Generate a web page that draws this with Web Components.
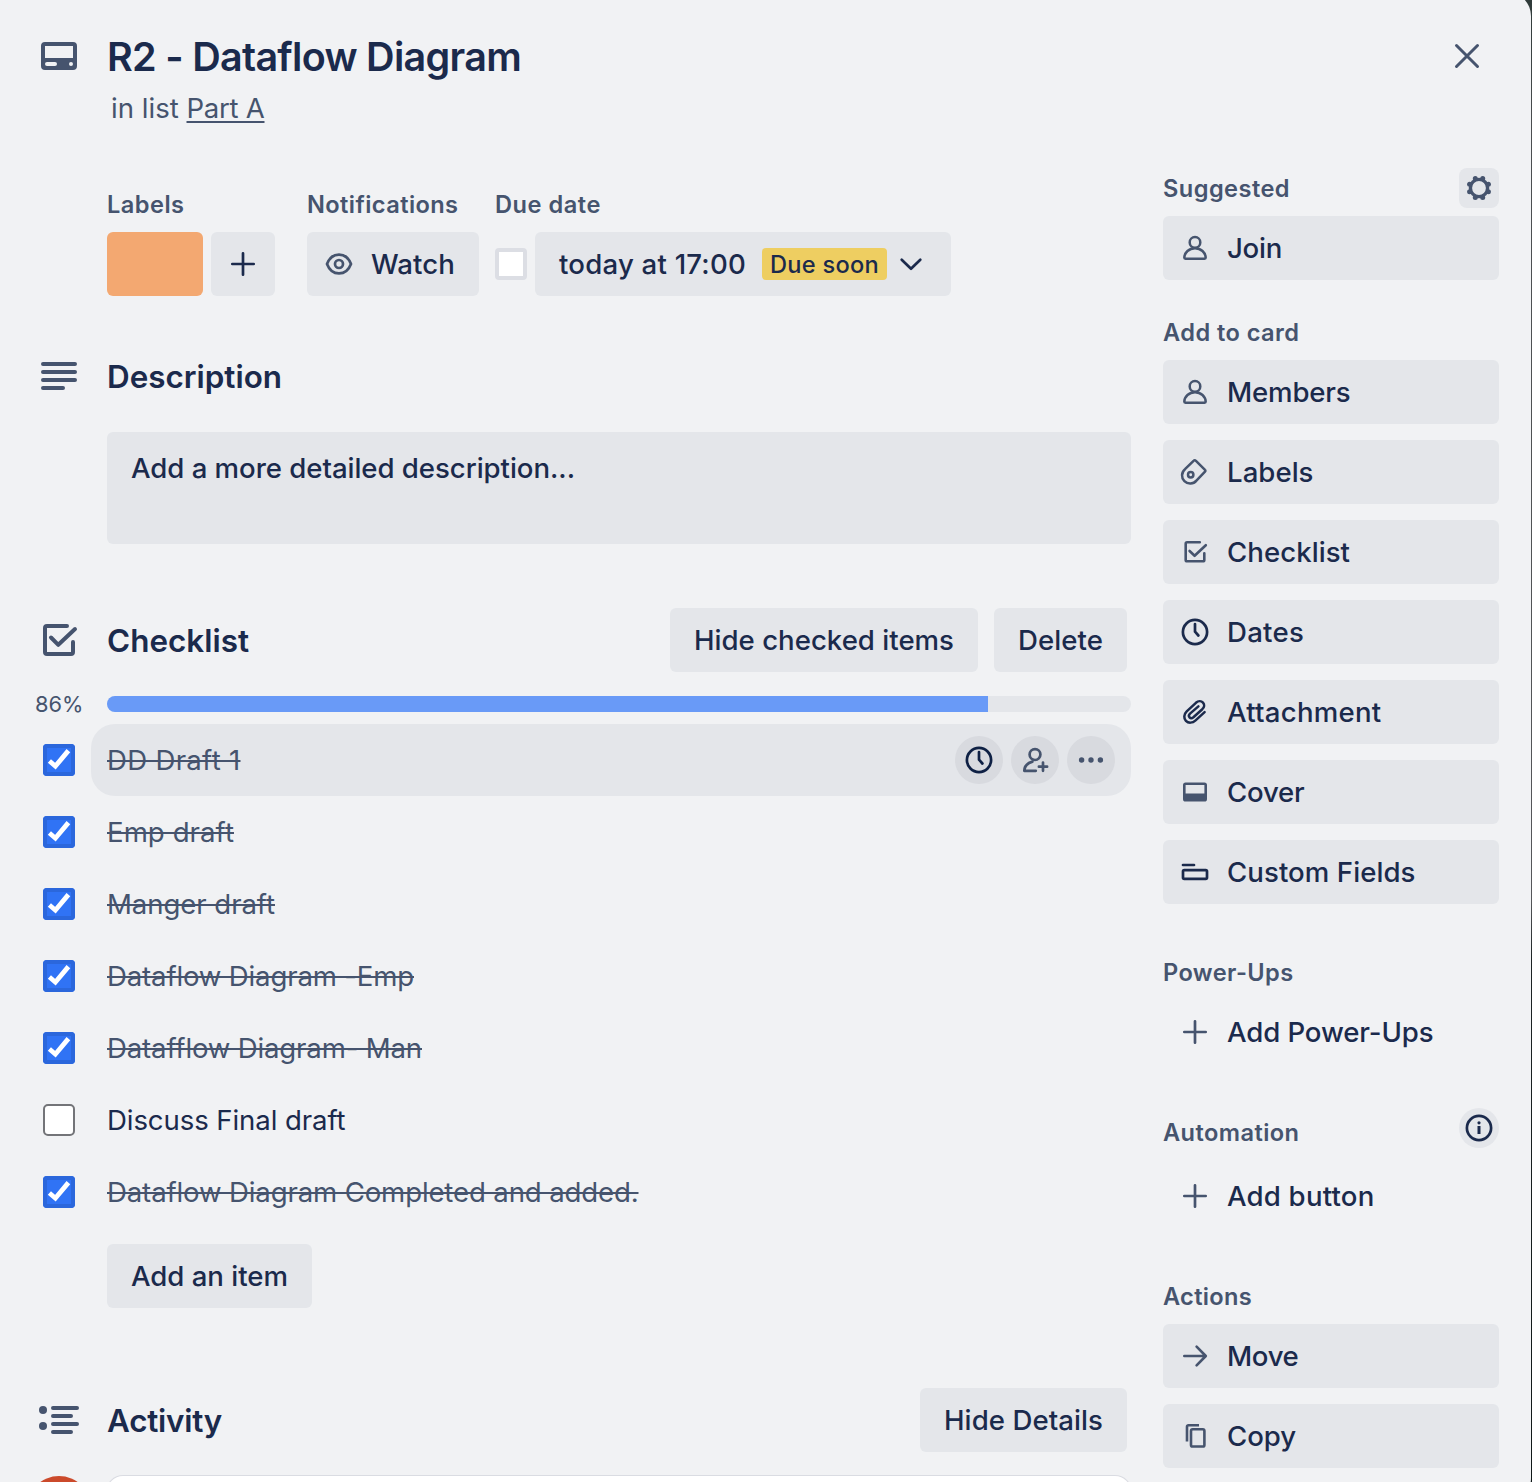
<!DOCTYPE html>
<html lang="en">
<head>
<meta charset="utf-8">
<title>R2 - Dataflow Diagram</title>
<style>
html,body{margin:0;height:1482px;overflow:hidden;background:linear-gradient(#2f3a39,#4b4e50 130px,#55575a 900px,#1c2324 960px,#101818)}
body{font-family:Inter,"Noto Sans",sans-serif;font-size:27.6px;color:#1b2a4c;
--bg:#f1f2f4;--btn:#e4e6ea;--ink:#1b2a4c;--muted:#46546e}
</style>
</head>
<body>
<card-dialog></card-dialog>
<script>
const ICONS = {
  card:['<path fill="currentColor" fill-rule="evenodd" d="M-14-14H14a4 4 0 0 1 4 4V10a4 4 0 0 1-4 4H-14a4 4 0 0 1-4-4V-10a4 4 0 0 1 4-4ZM-14-10V2H14V-10ZM-12 6a2 2 0 0 0 0 4h8a2 2 0 0 0 0-4ZM12 6a2 2 0 0 0 0 4a2 2 0 0 0 0-4Z" stroke="none"/>',0],
  lines:['<path d="M-16-12H16M-16-4H16M-16 4H16M-16 12H4"/>',4],
  activity:['<g fill="currentColor" stroke="none"><circle cx="-16" cy="-10" r="4"/><circle cx="-16" cy="6" r="4"/></g><path d="M-6-12H18M-6-4H12M-6 4H18M-6 12H12"/>',4],
  bigcheck:['<path d="M8-14H-12a2 2 0 0 0-2 2V12a2 2 0 0 0 2 2H12a2 2 0 0 0 2-2V2M-8-2.5L-.7 4.8L16-11"/>',4],
  close:['<path d="M-10.5-10.5L10.5 10.5M10.5-10.5L-10.5 10.5"/>',3],
  gear:['<circle r="8.6"/><g fill="currentColor" stroke="none"><circle cx="3.7" cy="9.4" r="2.5"/><circle cx="-3.7" cy="9.4" r="2.5"/><circle cx="3.7" cy="-9.4" r="2.5"/><circle cx="-3.7" cy="-9.4" r="2.5"/><circle cx="9.4" cy="3.7" r="2.5"/><circle cx="9.4" cy="-3.7" r="2.5"/><circle cx="-9.4" cy="3.7" r="2.5"/><circle cx="-9.4" cy="-3.7" r="2.5"/></g>',3.4],
  plus:['<path d="M-10.7 0H10.7M0-10.7V10.7"/>',2.7],
  eye:['<path d="M-12 0C-9.8-5.8-5.4-9.4 0-9.4S9.8-5.8 12 0C9.8 5.8 5.4 9.4 0 9.4S-9.8 5.8-12 0Z"/><circle r="4"/>',2.7],
  chevron:['<path d="M-9.3-4.2L0 4.8L9.3-4.2"/>',2.7],
  clock:['<circle r="12.1"/><path d="M0-8V-.3L3.4 3.5"/>',2.7],
  adduser:['<circle cy="-5.4" r="5.4"/><path d="M-2.6 1.6C-7.4 3-10.6 6.4-10.7 10.8H.8M8 2.6V10.8M3.9 6.7H12.1"/>',2.7],
  dots:['<g fill="currentColor" stroke="none"><circle cx="-9.4" r="2.7"/><circle r="2.7"/><circle cx="9.4" r="2.7"/></g>',0],
  member:['<circle cy="-5.6" r="5.3"/><path d="M-10.7 9.6C-10.5 4.6-6 .2 0 .2S10.5 4.6 10.7 9.6a1.1 1.1 0 0 1-1.1 1.1H-9.6a1.1 1.1 0 0 1-1.1-1.1Z"/>',2.5],
  label:['<path d="M-10-2.8L-1.2-11.4a1.3 1.3 0 0 1 1.9 0L10-2.2a1.3 1.3 0 0 1 0 1.9L1.4 8.6A8.1 8.1 0 1 1-10-2.8Z"/><circle cx="-4.3" cy="2.8" r="2.7"/>',2.5],
  check:['<path d="M4.8-9.7H-7.9a1.4 1.4 0 0 0-1.4 1.4V7.9a1.4 1.4 0 0 0 1.4 1.4H7.9a1.4 1.4 0 0 0 1.4-1.4V1.2M-5.4-1L-.4 3.8L10.8-6.8"/>',2.6],
  clip:['<path d="M9.6.2L.6 8.4C-2.6 11.4-6.8 11.2-9.1 8.8S-11.3 2.2-8.3-.7L.9-9.2C3.3-11.3 6.3-11.2 8-9.4S9.5-4.9 7.3-2.8L-1.6 5.2C-3 6.4-4.6 6.3-5.5 5.3S-6.2 2.8-5 1.6L3.4-5.6"/>',2.5],
  cover:['<path fill="currentColor" stroke="none" fill-rule="evenodd" d="M-9.4-9.6H9.4A2.6 2.6 0 0 1 12-7V7A2.6 2.6 0 0 1 9.4 9.6H-9.4A2.6 2.6 0 0 1-12 7V-7A2.6 2.6 0 0 1-9.4-9.6ZM-9.4-7V1.4H9.4V-7Z"/>',0],
  fields:['<path d="M-12-7H-1"/><rect x="-12" y="-1.8" width="24" height="8.6" rx="1.3"/>',2.7],
  info:['<circle r="12.1"/><path stroke-linecap="butt" stroke-width="3" d="M0-2V6"/><circle cy="-5.2" r="1.6" fill="currentColor" stroke="none"/>',2.7],
  arrow:['<path d="M-10.7 0H10.6M1.6-9.4L10.8 0L1.6 9.4"/>',2.6],
  copy:['<path stroke-linecap="butt" d="M4-10.7H-6.6a1.4 1.4 0 0 0-1.4 1.4V5.5"/><rect x="-4" y="-6.7" width="13.4" height="17.2" rx="1.6"/>',2.6]
};

class Base extends HTMLElement {
  constructor(){ super(); this.attachShadow({mode:'open'}); }
  connectedCallback(){ if(!this.shadowRoot.firstChild) this.shadowRoot.innerHTML = this.render(); }
  a(name, fallback=''){ return this.getAttribute(name) ?? fallback; }
}

/* Line of text spread over a given advance width */
class FitText extends HTMLElement {
  constructor(){
    super();
    this.attachShadow({mode:'open'}).innerHTML = '<style>:host{display:inline-block;white-space:pre;flex:none}</style><slot></slot>';
  }
  connectedCallback(){
    const width = parseFloat(this.getAttribute('w'));
    if(!width) return;
    const natural = this.getBoundingClientRect().width;
    this.style.letterSpacing = ((width - natural) / this.textContent.length).toFixed(3) + 'px';
  }
}

class UiIcon extends Base {
  render(){
    const [body, stroke] = ICONS[this.a('name')];
    return `<style>:host{display:block;width:40px;height:40px;flex:none;color:var(--muted)}svg{display:block;overflow:visible}</style>
    <svg width="40" height="40" viewBox="-20 -20 40 40" fill="none" stroke="currentColor" stroke-width="${stroke}" stroke-linecap="round" stroke-linejoin="round">${body}</svg>`;
  }
}

class UiButton extends Base {
  render(){
    return `<style>:host{display:flex;align-items:center;box-sizing:border-box;height:64px;padding:0 24px;background:var(--btn);border-radius:6px;font-weight:500;line-height:40px;flex:none}</style><slot></slot><fit-text w="${this.a('w')}">${this.a('label')}</fit-text>`;
  }
}

class SideButton extends Base {
  render(){
    return `<style>:host{display:flex;align-items:center;gap:12px;box-sizing:border-box;height:64px;padding:0 12px;background:var(--btn);border-radius:6px;font-weight:500;line-height:40px}
    :host([plain]){background:none}
    :host([dark]) ui-icon{color:var(--ink)}</style><ui-icon name="${this.a('icon')}"></ui-icon><fit-text w="${this.a('w')}">${this.a('label')}</fit-text>`;
  }
}

class SmallHeading extends Base {
  render(){
    return `<style>:host{display:flex;align-items:center;justify-content:space-between;height:40px;font-size:23.6px;font-weight:600;line-height:40px;color:var(--muted)}</style><fit-text w="${this.a('w')}">${this.a('label')}</fit-text><slot></slot>`;
  }
}

class SideSection extends Base {
  render(){
    return `<style>:host{display:flex;flex-direction:column}
    small-heading{line-height:42px;align-items:flex-start}
    .items{display:flex;flex-direction:column;gap:16px;margin-top:8px}</style>
    <small-heading label="${this.a('label')}" w="${this.a('w')}"><slot name="action"></slot></small-heading><div class="items"><slot></slot></div>`;
  }
}

class SectionHead extends Base {
  render(){
    return `<style>:host{display:flex;align-items:center;height:64px;margin-left:-68px;padding-right:4px;gap:16px}
    h2{margin:0 auto 0 12px;font-size:31.4px;font-weight:600;line-height:40px;padding-top:2px}</style>
    <ui-icon name="${this.a('icon')}"></ui-icon><h2><fit-text w="${this.a('w')}">${this.a('label')}</fit-text></h2><slot></slot>`;
  }
}

class CheckBox extends Base {
  render(){
    const kind = this.a('kind');
    return `<style>:host{display:block;box-sizing:border-box;width:32px;height:32px;border-radius:4px;flex:none;background:#fff}
    :host([kind=due]){border:4px solid #dcdee4}
    :host([kind=off]){border:2px solid #737478;border-radius:5px}
    :host([kind=on]){background:#3073f5;box-shadow:inset 0 0 0 4px #2b67dc}
    svg{display:block}</style>` + (kind === 'on' ? '<svg width="32" height="32" fill="none" stroke="#fff" stroke-width="4.8"><path d="M6.4 17L12.4 22.2L25.4 6.6"/></svg>' : '');
  }
}

class CheckItem extends Base {
  render(){
    const on = !this.hasAttribute('open');
    const tools = this.hasAttribute('active') ? '<div class="tools"><span><ui-icon class="d" name="clock"></ui-icon></span><span><ui-icon name="adduser"></ui-icon></span><span><ui-icon name="dots"></ui-icon></span></div>' : '';
    return `<style>:host{display:flex;align-items:center;height:72px;margin-left:-64px;gap:16px}
    .row{flex:1;display:flex;align-items:center;justify-content:space-between;box-sizing:border-box;height:72px;padding:0 16px;border-radius:24px;line-height:40px}
    :host([active]) .row{background:var(--btn)}
    .done{color:var(--muted);text-decoration:line-through;text-decoration-thickness:2px}
    .tools{display:flex;gap:8px}
    .tools span{display:flex;align-items:center;justify-content:center;width:48px;height:48px;border-radius:50%;background:#d8dadf}
    .d{color:#0e2044}</style>
    <check-box kind="${on ? 'on' : 'off'}"></check-box>
    <div class="row"><fit-text class="${on ? 'done' : ''}" w="${this.a('w')}">${this.a('label')}</fit-text>${tools}</div>`;
  }
}

class ProgressMeter extends Base {
  render(){
    return `<style>:host{display:flex;align-items:center;height:16px}
    .pct{width:72px;font-size:21.8px;line-height:16px;color:var(--muted)}
    .track{flex:1;height:16px;border-radius:8px;background:var(--btn);overflow:hidden}
    .fill{height:16px;width:${this.a('value')}%;background:#699af7}</style>
    <div class="pct"><fit-text w="48.5">${this.a('value')}%</fit-text></div><div class="track"><div class="fill"></div></div>`;
  }
}

class CardHeader extends Base {
  render(){
    return `<style>:host{display:flex;gap:28px;padding:36px 44px 0 39px;height:128px;box-sizing:border-box}
    .t{flex:1}
    h1{margin:0;height:42px;font-size:39.5px;font-weight:600;line-height:42px}
    p{margin:10px 0 0 4px;line-height:40px;height:40px;color:var(--muted);display:flex}
    .u{text-decoration:underline;text-decoration-thickness:2px;text-underline-offset:3px;text-decoration-skip-ink:none}
    .x{margin-top:-.5px}</style>
    <ui-icon name="card"></ui-icon>
    <div class="t"><h1><fit-text w="414">R2 - Dataflow Diagram</fit-text></h1><p><fit-text w="75.5">in list </fit-text><fit-text class="u" w="78">Part A</fit-text></p></div>
    <ui-icon class="x" name="close"></ui-icon>`;
  }
}

class CardMeta extends Base {
  render(){
    return `<style>:host{display:flex;align-items:flex-start}
    .g{display:flex;flex-direction:column;gap:7px}
    .r{display:flex;align-items:center;gap:8px}
    .l{margin-right:32px}.n{margin-right:16px}
    .swatch{width:96px;height:64px;border-radius:6px;background:#f3a871}
    .p{padding:0 12px}.p ui-icon,.due ui-icon{color:var(--ink)}
    .w{padding:0 24px 0 12px}
    .w ui-icon{margin-right:12px}
    .due{display:flex;align-items:center;box-sizing:border-box;width:416px;height:64px;padding-left:24px;border-radius:6px;background:var(--btn);font-weight:500;line-height:40px}
    .badge{margin:0 4px 0 16px;height:32px;width:125px;box-sizing:border-box;padding:0 8px;border-radius:4px;background:#eece61;font-size:23.6px;line-height:33px;white-space:nowrap}</style>
    <div class="g l"><small-heading label="Labels" w="77.5"></small-heading><div class="r"><div class="swatch"></div><ui-button class="p"><ui-icon name="plus"></ui-icon></ui-button></div></div>
    <div class="g n"><small-heading label="Notifications" w="151.5"></small-heading><ui-button class="w" label="Watch" w="84"><ui-icon name="eye"></ui-icon></ui-button></div>
    <div class="g"><small-heading label="Due date" w="106"></small-heading><div class="r"><check-box kind="due"></check-box><div class="due"><fit-text w="187">today at 17:00</fit-text><div class="badge"><fit-text w="109">Due soon</fit-text></div><ui-icon name="chevron"></ui-icon></div></div></div>`;
  }
}

class CommentRow extends Base {
  render(){
    return `<style>:host{display:flex;gap:16px;margin:24px 0 0 -80px}
    .av{width:64px;height:64px;border-radius:50%;background:#cb4a2b;flex:none}
    .box{flex:1;height:72px;box-sizing:border-box;border-radius:16px;background:#fff;box-shadow:0 0 0 1px #dadce2,0 2px 2px #ccd0d8}</style><div class="av"></div><div class="box"></div>`;
  }
}

class CardMain extends Base {
  render(){
    return `<style>:host{display:flex;flex-direction:column;width:1024px;padding-top:57px}
    .desc{height:112px;box-sizing:border-box;padding:16px 24px;border-radius:6px;background:var(--btn);font-weight:500;line-height:40px;margin:24px 0 64px}
    .d{margin-top:48px}.m{margin:24px 0 12px -72px}
    .add{align-self:flex-start;margin:16px 0 80px}</style>
    <card-meta></card-meta>
    <section-head class="d" icon="lines" label="Description" w="175"></section-head>
    <div class="desc"><fit-text w="444">Add a more detailed description...</fit-text></div>
    <section-head icon="bigcheck" label="Checklist" w="142"><ui-button label="Hide checked items" w="260"></ui-button><ui-button label="Delete" w="85"></ui-button></section-head>
    <progress-meter class="m" value="86"></progress-meter>
    <check-item active label="DD Draft 1" w="133.5"></check-item>
    <check-item label="Emp draft" w="127"></check-item>
    <check-item label="Manger draft" w="168"></check-item>
    <check-item label="Dataflow Diagram -Emp" w="307"></check-item>
    <check-item label="Datafflow Diagram- Man" w="315"></check-item>
    <check-item open label="Discuss Final draft" w="238.5"></check-item>
    <check-item label="Dataflow Diagram Completed and added." w="531.5"></check-item>
    <ui-button class="add" label="Add an item" w="157"></ui-button>
    <section-head icon="activity" label="Activity" w="115"><ui-button label="Hide Details" w="159"></ui-button></section-head>
    <comment-row></comment-row>`;
  }
}

class CardSidebar extends Base {
  render(){
    return `<style>:host{display:flex;flex-direction:column;width:336px;padding-top:40px}
    .tool{display:flex;width:40px;height:40px;border-radius:8px;background:var(--btn)}
    .round{border-radius:50%;margin-top:-4px}
    .round ui-icon{color:var(--ink)}
    .s{margin-top:32px}.b{margin-top:48px}.c{margin-top:48px}</style>
    <side-section label="Suggested" w="127"><span slot="action" class="tool"><ui-icon name="gear"></ui-icon></span><side-button icon="member" label="Join" w="55"></side-button></side-section>
    <side-section class="s" label="Add to card" w="136.5">
      <side-button icon="member" label="Members" w="123.5"></side-button>
      <side-button icon="label" label="Labels" w="86.5"></side-button>
      <side-button icon="check" label="Checklist" w="123"></side-button>
      <side-button dark icon="clock" label="Dates" w="77"></side-button>
      <side-button dark icon="clip" label="Attachment" w="154.5"></side-button>
      <side-button icon="cover" label="Cover" w="77.5"></side-button>
      <side-button dark icon="fields" label="Custom Fields" w="188.5"></side-button>
    </side-section>
    <side-section class="b" label="Power-Ups" w="130.5"><side-button plain icon="plus" label="Add Power-Ups" w="206.5"></side-button></side-section>
    <side-section class="c" label="Automation" w="136.5"><span slot="action" class="tool round"><ui-icon name="info"></ui-icon></span><side-button plain icon="plus" label="Add button" w="147.5" style="margin-top:4px"></side-button></side-section>
    <side-section class="c" label="Actions" w="89"><side-button icon="arrow" label="Move" w="71.5"></side-button><side-button icon="copy" label="Copy" w="69"></side-button></side-section>`;
  }
}

class CardDialog extends Base {
  render(){
    return `<style>:host{display:block;height:1482px;overflow:hidden}
    .panel{box-sizing:border-box;height:1510px;margin:-8px 1px 0 -6px;padding:8px 0 0 6px;border-radius:24px;background:var(--bg)}
    .cols{display:flex;gap:32px;padding-left:107px}</style>
    <div class="panel"><card-header></card-header><div class="cols"><card-main></card-main><card-sidebar></card-sidebar></div></div>`;
  }
}

const define = (name, cls) => customElements.define(name, cls);
define('card-dialog', CardDialog);
define('card-header', CardHeader);
define('card-main', CardMain);
define('card-sidebar', CardSidebar);
define('card-meta', CardMeta);
define('comment-row', CommentRow);
define('progress-meter', ProgressMeter);
define('section-head', SectionHead);
define('side-section', SideSection);
define('small-heading', SmallHeading);
define('side-button', SideButton);
define('check-item', CheckItem);
define('check-box', CheckBox);
define('ui-button', UiButton);
define('ui-icon', UiIcon);
define('fit-text', FitText);
</script>
</body>
</html>
